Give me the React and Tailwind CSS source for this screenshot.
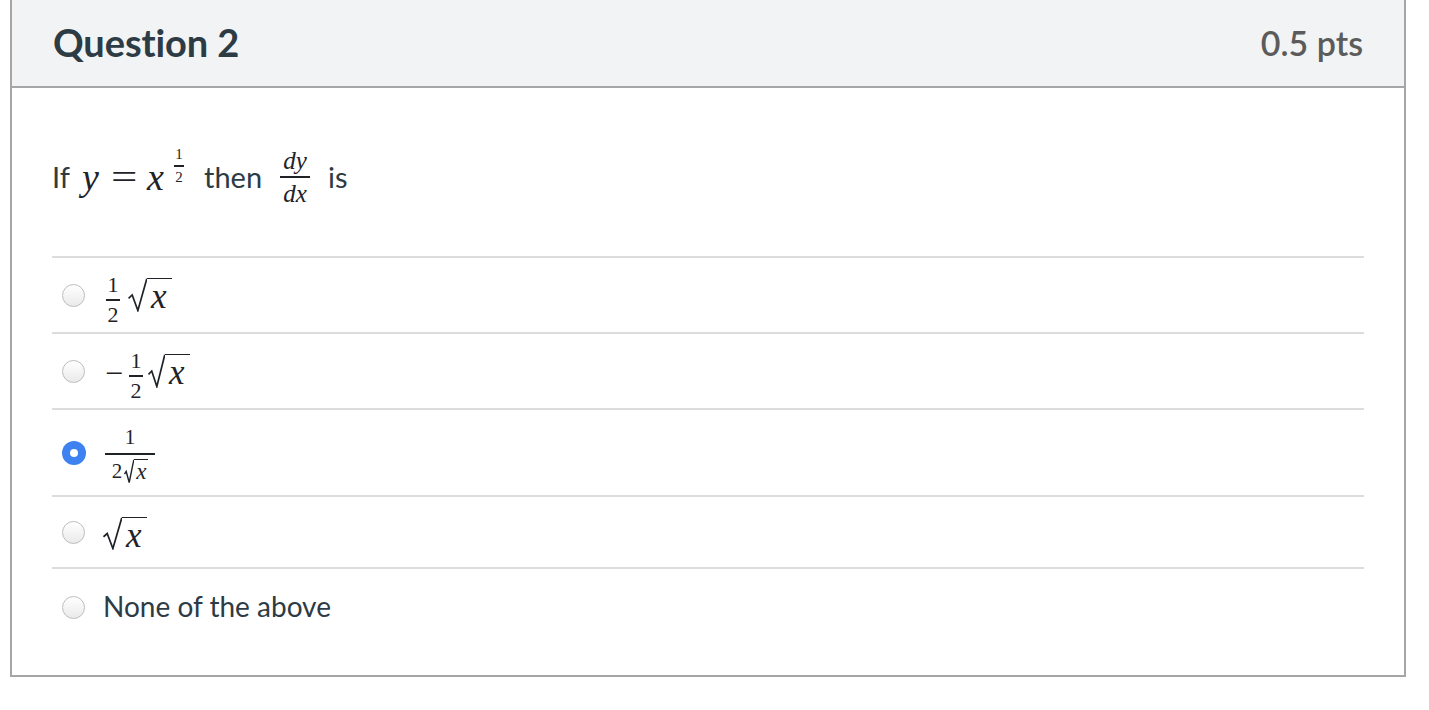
import React from "react";

const LATO = { fontFamily: "Lato, 'Liberation Sans', sans-serif" };
const MATH = { fontFamily: "'Liberation Serif', 'DejaVu Serif', serif", color: "#1f2328" };
const INK = "#1f2328";

function Radical({ h = 36, w = 18, sw = 1.7 }) {
  return (
    <svg width={w} height={h} viewBox={`0 0 ${w} ${h}`} className="block shrink-0" aria-hidden="true">
      <path
        d={`M0.5 ${h * 0.6} L${w * 0.22} ${h * 0.5} L${w * 0.52} ${h - 1.5} L${w - 0.2} 0.8`}
        fill="none"
        stroke={INK}
        strokeWidth={sw}
        strokeLinejoin="miter"
      />
    </svg>
  );
}

function Sqrt({ h = 36, w = 18, size = "text-[35px]", pb = "pb-[3px]", px = "pl-[4px] pr-[5px]" }) {
  return (
    <span className="inline-flex items-stretch">
      <Radical h={h} w={w} />
      <span className={`border-t-[1.7px] border-[#1f2328] italic leading-none flex items-end ${px} ${pb} ${size}`}>
        x
      </span>
    </span>
  );
}

function Frac({ num, den, size = "text-[20px]", bar = "w-[13px]", gap = "2px" }) {
  return (
    <span className={`flex flex-col items-center leading-none ${size}`}>
      <span style={{ paddingBottom: gap }}>{num}</span>
      <span className={`h-[1.5px] bg-[#1f2328] ${bar}`} />
      <span style={{ paddingTop: gap }}>{den}</span>
    </span>
  );
}

function RadioBtn({ checked }) {
  if (checked) {
    return (
      <span className="w-[24px] h-[24px] rounded-full bg-[#3d82f0] flex items-center justify-center shrink-0">
        <span className="w-[8px] h-[8px] rounded-full bg-white" />
      </span>
    );
  }
  return (
    <span className="w-[23px] h-[23px] rounded-full border border-[#bdbdbd] bg-gradient-to-b from-white to-[#eaeaea] shrink-0" />
  );
}

function Row({ checked, children, h }) {
  return (
    <div className={`flex items-center border-t-2 border-[#dcdcdc] ${h}`}>
      <div className="w-[51px] flex pl-[10px]">
        <RadioBtn checked={checked} />
      </div>
      <div style={MATH} className="flex items-center">
        {children}
      </div>
    </div>
  );
}

export default function App() {
  return (
    <div className="w-[1429px] h-[710px] bg-white" style={LATO}>
      <div className="ml-[10px] w-[1396px] border-2 border-t-0 border-[#a6a6a6]">
        <div className="h-[88px] bg-[#f2f3f4] border-b-2 border-[#a6a6a6] flex items-center justify-between pl-[41px] pr-[41px] pb-[2px]">
          <h2 className="text-[38px] font-bold text-[#2d3b45] tracking-[-0.1px]">Question 2</h2>
          <span className="text-[34px] font-semibold text-[#5b5b5b]">0.5 pts</span>
        </div>
        <div className="px-[40px] pt-[58px] pb-[30px]">
          <div className="h-[110px] flex items-start text-[29px] text-[#2d3b45]">
            <div className="flex items-center h-[62px]">
              <span className="w-[19px]">If</span>
              <span style={MATH} className="italic text-[38px] ml-[11px] w-[18px] leading-none">y</span>
              <span style={MATH} className="text-[36px] ml-[11px] w-[26px] flex justify-center leading-none">
                <span className="inline-block scale-x-[1.3]">=</span>
              </span>
              <span style={MATH} className="italic text-[38px] ml-[10px] w-[19px] leading-none">x</span>
              <span style={MATH} className="flex self-start mt-[1px] ml-[8px]">
                <Frac num="1" den="2" size="text-[15px]" bar="w-[10px]" gap="3px" />
              </span>
              <span className="ml-[20px]">then</span>
              <span style={MATH} className="flex ml-[18px] italic">
                <Frac num="dy" den="dx" size="text-[25px]" bar="w-[30px]" gap="3px" />
              </span>
              <span className="ml-[18px]">is</span>
            </div>
          </div>
          <Row h="h-[76px]">
            <span className="flex ml-[3px] mt-[10px]">
              <Frac num="1" den="2" size="text-[22px]" bar="w-[14px]" gap="3px" />
            </span>
            <span className="flex ml-[8px] mt-[4px]">
              <Sqrt h={34} w={19} />
            </span>
          </Row>
          <Row h="h-[76px]">
            <span className="text-[32px] ml-[2px] mr-[6px] mt-[4px] leading-none">−</span>
            <span className="flex mt-[10px]">
              <Frac num="1" den="2" size="text-[22px]" bar="w-[14px]" gap="3px" />
            </span>
            <span className="flex ml-[5px] mt-[4px]">
              <Sqrt h={34} w={17} />
            </span>
          </Row>
          <Row checked h="h-[87px]">
            <span className="ml-[2px] mt-[6px] flex flex-col items-center leading-none">
              <span className="text-[21px] pb-[5px]">1</span>
              <span className="h-[2px] w-[50px] bg-[#1f2328]" />
              <span className="flex items-end pt-[4px]">
                <span className="text-[21px] leading-none mb-[3px]">2</span>
                <span className="inline-flex items-stretch ml-[2px]">
                  <Radical h={25} w={10} sw={1.4} />
                  <span className="border-t-[1.4px] border-[#1f2328] pl-[2px] pr-[2px] italic text-[23px] leading-none flex items-end pb-[2px]">x</span>
                </span>
              </span>
            </span>
          </Row>
          <Row h="h-[72px]">
            <span className="flex ml-[0px] mt-[8px]">
              <Sqrt h={33} w={19} />
            </span>
          </Row>
          <div className="flex items-center border-t-2 border-[#dcdcdc] h-[78px]">
            <div className="w-[51px] flex pl-[10px]">
              <RadioBtn />
            </div>
            <span className="text-[28px] text-[#2d3b45] -mt-[2px]">None of the above</span>
          </div>
        </div>
      </div>
    </div>
  );
}
